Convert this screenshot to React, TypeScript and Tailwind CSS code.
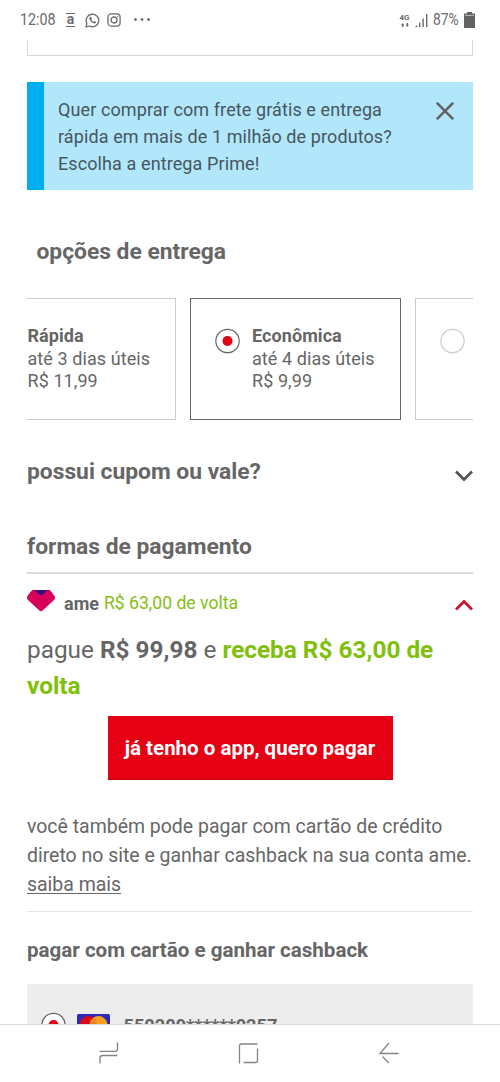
import React from "react";

function StatusBar() {
  return (
    <header className="flex h-10 shrink-0 items-center pl-5 pr-[25px] text-[#6b6b6b]">
      <span className="w-[36px] whitespace-nowrap text-[16px] leading-5">
        <span className="inline-block origin-left scale-x-[0.89]">12:08</span>
      </span>
      <span className="ml-[10px] flex h-[14px] w-[9px] items-center justify-center border-y border-[#666] text-[14px] font-bold leading-[10px]">
        <span className="-mt-[3px]">a</span>
      </span>
      <svg className="ml-[10px]" width="15" height="15" viewBox="0 0 15 15" fill="none" stroke="currentColor" strokeWidth="1.3">
        <path d="M1 14l.9-3.5a6.3 6.3 0 1 1 2.5 2.5z" strokeLinejoin="round" />
        <path d="M4.9 4.1c-.9 1-.5 2.5.9 4.1s3 2.6 4.3 2.1c.8-.3 1.2-1 .9-1.4L9.500 8.100l-1 .8c-1-.4-1.800-1.200-2.200-2.100l.7-.9-.7-1.600c-.3-.6-1-.6-1.400-.2z" fill="currentColor" stroke="none" />
      </svg>
      <svg className="ml-[7px]" width="14" height="14" viewBox="0 0 14 14" fill="none" stroke="currentColor" strokeWidth="1.3">
        <rect x=".9" y=".9" width="12.200" height="12.200" rx="3.300" />
        <circle cx="7" cy="7" r="3" />
        <circle cx="10.600" cy="3.400" r=".6" fill="currentColor" stroke="none" />
      </svg>
      <svg className="ml-[12px]" width="18" height="4" viewBox="0 0 18 4" fill="#555">
        <circle cx="2.500" cy="1.500" r="1.300" />
        <circle cx="9" cy="1.500" r="1.300" />
        <circle cx="15.500" cy="1.500" r="1.300" />
      </svg>
      <div className="ml-auto flex items-center">
        <div className="flex w-[11px] flex-col items-center">
          <span className="text-[8px] font-bold leading-[8px]">4G</span>
          <svg className="mt-px" width="8" height="4" viewBox="0 0 8 4" fill="currentColor">
            <path d="M0 2.200L1.700 0l1.700 2.200h-1V4H1V2.200zM4.600 1.800h1V0H7v1.800h1L6.300 4z" />
          </svg>
        </div>
        <svg className="ml-[5px]" width="14" height="13" viewBox="0 0 14 13" fill="currentColor">
          <path d="M0 13l2.200-2.200V13zM4 8.500h1.400V13H4zM7.400 4.500h1.400V13H7.400zM11 0h1.400v13H11z" />
        </svg>
        <span className="ml-[4px] w-[26px] whitespace-nowrap text-[16px] leading-5">
          <span className="inline-block origin-left scale-x-[0.86]">87%</span>
        </span>
        <svg className="ml-[5px] -mt-px" width="11" height="16" viewBox="0 0 11 16">
          <path d="M3 0h5v1.500h3V16H0V1.500h3z" fill="#626262" />
          <path d="M1 3.400h9" stroke="#bbb" strokeWidth="1" />
        </svg>
      </div>
    </header>
  );
}

function Radio({ checked = false }: { checked?: boolean }) {
  return (
    <svg width="26" height="26" viewBox="0 0 26 26" fill="none" className="shrink-0">
      <circle cx="12.500" cy="13" r="11.700" fill="#fff" stroke={checked ? "#666" : "#ccc"} strokeWidth="1.200" />
      {checked && <circle cx="12.500" cy="13" r="5" fill="#e60014" />}
    </svg>
  );
}

function Shipping({ name, days, price }: { name: string; days: string; price: string }) {
  return (
    <div className="whitespace-nowrap text-[18px] leading-[22.500px] tracking-[0.080px]">
      <p className="font-bold">{name}</p>
      <p>{days}</p>
      <p>{price}</p>
    </div>
  );
}

export default function App() {
  return (
    <div className="flex h-[1082px] w-[500px] flex-col overflow-hidden bg-white font-['Roboto',sans-serif] text-[#666]">
      <StatusBar />
      <main className="flex min-h-0 flex-1 flex-col overflow-hidden pl-[27px] pr-[27px] *:shrink-0">
        <div className="h-4 border border-t-0 border-[#d5d5d5]" />

        <aside className="mt-[26px] flex h-[108px] justify-between border-l-[17px] border-[#00aeef] bg-[#b2e7fb] pl-[14px] pr-[19px] pt-[13.500px] text-[#46565e]">
          <p className="whitespace-nowrap text-[18px] leading-[27px] tracking-[0.100px]">
            Quer comprar com frete grátis e entrega
            <br />
            rápida em mais de 1 milhão de produtos?
            <br />
            Escolha a entrega Prime!
          </p>
          <svg className="mt-[6.500px]" width="18" height="18" viewBox="0 0 18 18" stroke="#626262" strokeWidth="2.600">
            <path d="M.8.8l16.400 16.400M17.200.8L.8 17.200" />
          </svg>
        </aside>

        <h2 className="mt-[46px] h-[30px] whitespace-nowrap pl-[9.500px] text-[22.800px] font-bold leading-[32px]">opções de entrega</h2>

        <div className="mt-[32px] flex h-[122px] gap-[14px] overflow-hidden">
          <div className="w-[149px] shrink-0 border border-l-0 border-[#ccc] pt-[26px] pl-[0.500px]">
            <Shipping name="Rápida" days="até 3 dias úteis" price="R$ 11,99" />
          </div>
          <div className="flex w-[211px] shrink-0 gap-[11px] border border-[#666] pl-[24px] pt-[26px]">
            <div className="pt-[3px]"><Radio checked /></div>
            <Shipping name="Econômica" days="até 4 dias úteis" price="R$ 9,99" />
          </div>
          <div className="w-[211px] shrink-0 border border-[#ccc] pl-[24px] pt-[29px]">
            <Radio />
          </div>
        </div>

        <div className="mt-[36px] flex h-[30px] items-center justify-between">
          <h2 className="mt-[2px] whitespace-nowrap text-[22.800px] font-bold leading-[30px]">possui cupom ou vale?</h2>
          <svg className="mt-[10px]" width="18" height="12" viewBox="0 0 18 12" fill="none" stroke="#555" strokeWidth="2.800">
            <path d="M1 1.500l8 8 8-8" />
          </svg>
        </div>

        <h2 className="mt-[45px] h-[30px] whitespace-nowrap text-[22.800px] font-bold leading-[32px]">formas de pagamento</h2>
        <div className="mt-[11px] h-[2px] bg-[#d9d9d9]" />

        <div className="mt-[14px] flex h-[30px] items-center">
          <svg className="mb-[4px]" width="28" height="22" viewBox="0 0 28 22">
            <path d="M5.200.5h17.600L27.300 6.300v3L15 20.500q-1 .8-2 0L.7 9.300v-3z" fill="#d6005b" stroke="#d6005b" strokeLinejoin="round" />
            <path d="M7.500 0h13l-3.800 3.800Q14 6.300 11.300 3.800z" fill="#34127b" />
          </svg>
          <span className="ml-[9px] mt-[2px] text-[18px] font-bold leading-[24px]">ame</span>
          <span className="ml-[5px] whitespace-nowrap text-[17.600px] leading-[24px] text-[#84be16]">R$ 63,00 de volta</span>
          <svg className="ml-auto mt-[3px]" width="18" height="12" viewBox="0 0 18 12" fill="none" stroke="#cf1030" strokeWidth="2.800">
            <path d="M1 10.500l8-8 8 8" />
          </svg>
        </div>

        <p className="mt-[14px] whitespace-nowrap text-[24.350px] leading-[36px]">
          pague <b>R$ 99,98</b> e <b className="text-[#80c00b]">receba R$ 63,00 de<br />volta</b>
        </p>

        <button className="mt-[12px] h-[64px] w-[285px] self-center whitespace-nowrap border-b border-[#b90014] bg-[#e60014] pt-[2px] text-[20.500px] font-bold text-white">
          já tenho o app, quero pagar
        </button>

        <p className="mt-[32px] whitespace-nowrap text-[19.470px] leading-[29.200px]">
          você também pode pagar com cartão de crédito
          <br />
          direto no site e ganhar cashback na sua conta ame.
          <br />
          <a className="underline underline-offset-2">saiba mais</a>
        </p>
        <div className="mt-[11px] h-px bg-[#e6e6e6]" />

        <h3 className="mt-[22px] h-[30px] whitespace-nowrap text-[20.550px] font-bold leading-[32px]">pagar com cartão e ganhar cashback</h3>

        <div className="mt-[20px] flex h-[80px] items-start bg-[#ededed] pl-[14px] pt-[28px]">
          <Radio checked />
          <svg className="ml-[10px] mt-[2px]" width="33" height="22" viewBox="0 0 33 22">
            <rect width="33" height="22" rx="1.500" fill="#3028b8" />
            <circle cx="11.500" cy="11" r="9" fill="#d80b18" />
            <circle cx="21.500" cy="11" r="9" fill="#f9a020" />
            <path d="M12.500 6h7M12.500 9h7" stroke="#e75a18" />
          </svg>
          <span className="ml-[13.500px] mt-[2px] whitespace-nowrap text-[18.200px] font-bold leading-[24px]">550209******0257</span>
        </div>
      </main>

      <nav className="flex h-[58px] shrink-0 items-center border-t border-[#dcdcdc] bg-white text-[#858585]">
        <svg className="ml-[99px] -mt-px" width="20" height="22" viewBox="0 0 20 22" fill="none" stroke="currentColor" strokeWidth="1.300">
          <path d="M.5 9.300h15.500q2.500 0 2.500-2.500V.5M1 21.500v-5.500q0-2.500 2.500-2.500h15" />
        </svg>
        <svg className="ml-[119px] -mt-px" width="21" height="21" viewBox="0 0 21 21" fill="none" stroke="currentColor" strokeWidth="1.300">
          <path d="M1.500 20.500V3q0-2 2-2h16M19.500 5.500v12q0 2-2 2H5.500" />
        </svg>
        <svg className="ml-[120px] -mt-px" width="20" height="22" viewBox="0 0 20 22" fill="none" stroke="currentColor" strokeWidth="1.300">
          <path d="M19.500 11.500H1L9.800 1M3.500 14.500l6.300 6.500" />
        </svg>
      </nav>
    </div>
  );
}
